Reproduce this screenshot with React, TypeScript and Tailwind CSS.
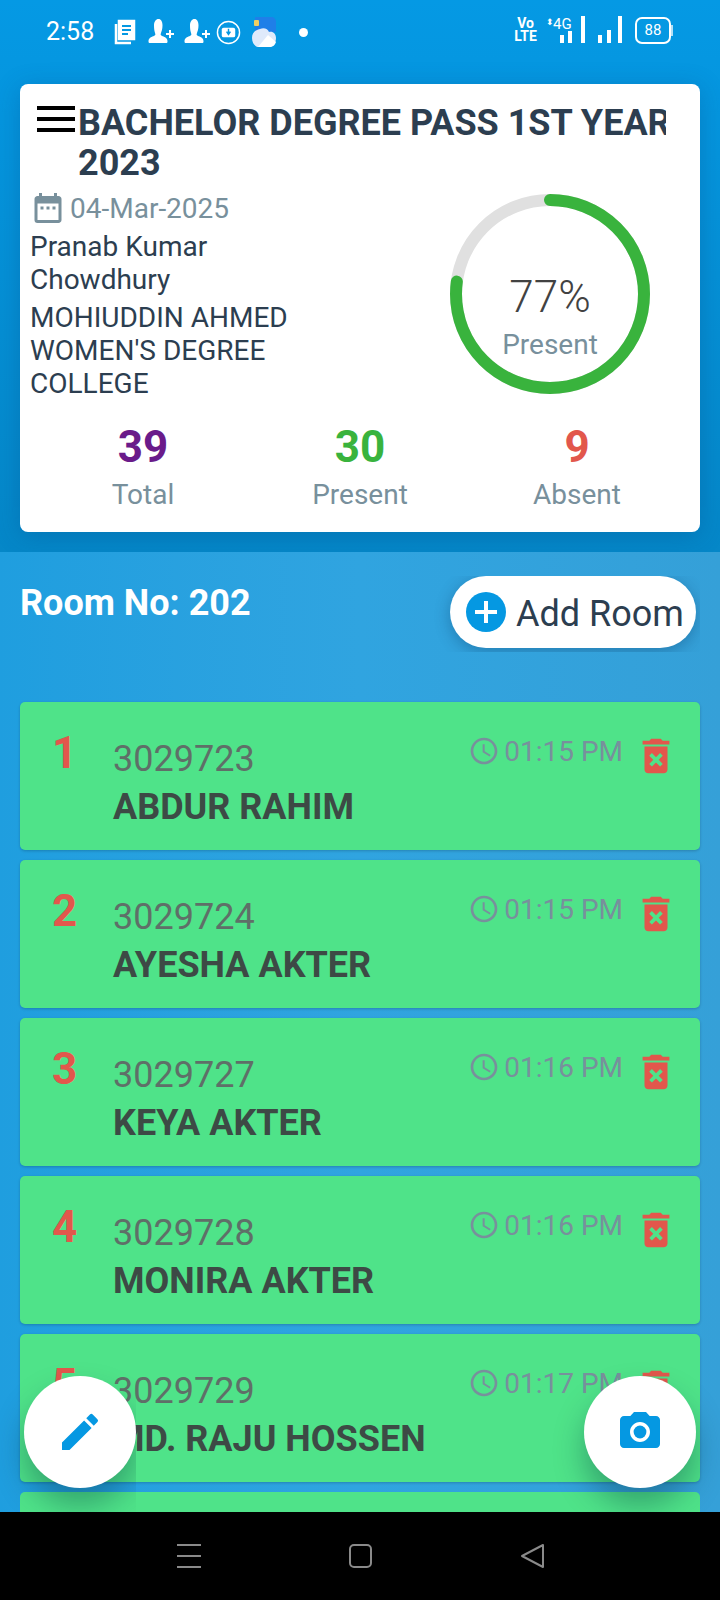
import { MdAccessTime, MdDateRange, MdDeleteForever, MdEdit, MdPhotoCamera } from 'react-icons/md';

const students = [
  { no: 1, roll: '3029723', name: 'ABDUR RAHIM', time: '01:15 PM' },
  { no: 2, roll: '3029724', name: 'AYESHA AKTER', time: '01:15 PM' },
  { no: 3, roll: '3029727', name: 'KEYA AKTER', time: '01:16 PM' },
  { no: 4, roll: '3029728', name: 'MONIRA AKTER', time: '01:16 PM' },
  { no: 5, roll: '3029729', name: 'MD. RAJU HOSSEN', time: '01:17 PM' },
];

function PersonAdd() {
  return (
    <svg width="26" height="28" viewBox="0 0 26 28" fill="white">
      <path d="M10.500 1c2.500 0 4 2.500 4 6.500 0 3.500-1 6-1.800 8.500-.3 1 .5 1.700 2 2.300 2.300.9 4.800 1.700 4.800 5.200 0 1-.5 1.500-1.500 1.500H2c-1 0-1.500-.5-1.500-1.500 0-3.500 2.500-4.300 4.800-5.200 1.500-.6 2.300-1.300 2-2.300C6.500 13.500 6 11 6 7.500 6 3.500 8 1 10.500 1z" />
      <path d="M21 12h2v3h3v2h-3v3h-2v-3h-3v-2h3z" />
    </svg>
  );
}

function StatusBar() {
  return (
    <div className="flex h-[84px] items-start justify-between pl-[46px] pr-[47px] pt-[16px] text-white">
      <div className="flex items-center">
        <span className="w-[68px] text-[25px] leading-[32px] font-normal">2:58</span>
        <div className="flex items-center">
          <svg width="22" height="28" viewBox="0 0 22 28" fill="none" stroke="white" strokeWidth="2.500">
            <path d="M5 3h15v18H5z" fill="white" />
            <path d="M2 6v19h15" />
            <path d="M8 8h9M8 12h9M8 16h6" stroke="#0598e2" strokeWidth="2" />
          </svg>
          <div className="ml-[12px]"><PersonAdd /></div>
          <div className="ml-[10px]"><PersonAdd /></div>
          <svg width="25" height="25" viewBox="0 0 26 26" fill="none" className="ml-[6px]">
            <circle cx="13" cy="13" r="11.500" stroke="white" strokeWidth="1.500" />
            <rect x="6" y="8" width="14" height="10" rx="2" fill="white" />
            <path d="M13 9v5M11 12l2 3 2-3" stroke="#0598e2" strokeWidth="1.500" />
          </svg>
          <svg width="24" height="30" viewBox="0 0 24 30" className="ml-[11px]">
            <path d="M3 0h16c3 0 5 2 5 5v10H3z" fill="#1f7fe8" />
            <rect x="2" y="3" width="5" height="6" rx="1" fill="#f0cf62" />
            <path d="M8 12c4-2 8 0 9 3 4-1 7 2 7 6 0 5-3 9-7 9H7c-4 0-7-4-7-9s3-8 8-9z" fill="#dfeafb" />
            <path d="M6 30l10-12 8 7c-1 3-3 5-7 5z" fill="white" />
          </svg>
          <span className="ml-[23px] h-[9px] w-[9px] rounded-full bg-white" />
        </div>
      </div>
      <div className="flex items-center">
        <div className="mr-[8px] flex w-[25px] flex-col text-center text-[14px] leading-[13px] font-bold">
          <span>Vo</span>
          <span>LTE</span>
        </div>
        <div className="relative h-[28px] w-[46px]">
          <span className="absolute top-[2px] left-0 text-[9px] leading-none">⬍</span>
          <span className="absolute top-[1px] left-[7px] text-[15px] leading-none">4G</span>
          <svg width="46" height="28" viewBox="0 0 46 28" fill="white">
            <rect x="14" y="19" width="4" height="8" />
            <rect x="22" y="15" width="4" height="12" />
            <rect x="35" y="0" width="4" height="27" />
          </svg>
        </div>
        <svg width="34" height="28" viewBox="0 0 34 28" fill="white" className="ml-[1px] mr-[8px]">
          <rect x="5" y="19" width="4" height="8" />
          <rect x="14" y="14" width="4" height="13" />
          <rect x="25" y="0" width="4" height="27" />
        </svg>
        <div className="flex items-center">
          <div className="flex h-[27px] w-[36px] items-center justify-center rounded-[7px] border-2 border-white text-[15px] leading-none">88</div>
          <div className="h-[11px] w-[2px] bg-white/70" />
        </div>
      </div>
    </div>
  );
}

function ProgressRing() {
  const r = 94;
  const circ = 2 * Math.PI * r;
  return (
    <div className="relative mt-[5px] mr-[50px] h-[200px] w-[200px]">
      <svg width="200" height="200" viewBox="0 0 200 200" className="-rotate-90">
        <circle cx="100" cy="100" r={r} fill="none" stroke="#e0e0e0" strokeWidth="12" />
        <circle
          cx="100"
          cy="100"
          r={r}
          fill="none"
          stroke="#39b33d"
          strokeWidth="12"
          strokeLinecap="round"
          strokeDasharray={`${circ * 0.77} ${circ}`}
        />
      </svg>
      <div className="absolute inset-0 flex flex-col items-center pt-[76px]">
        <span className="text-[44px] leading-[54px] font-light text-[#424242]">77%</span>
        <span className="mt-[3px] text-[28px] leading-[36px] text-[#78909c]">Present</span>
      </div>
    </div>
  );
}

function Stat({ value, label, color }: { value: string; label: string; color: string }) {
  return (
    <div className="flex flex-col items-center">
      <span className={`text-[44px] leading-[50px] font-bold ${color}`}>{value}</span>
      <span className="mt-[3px] text-[28px] leading-[40px] text-[#78909c]">{label}</span>
    </div>
  );
}

function Summary() {
  return (
    <div className="mx-5 h-[448px] rounded-[8px] bg-white shadow-[0_4px_24px_rgba(0,60,120,0.25)]">
      <div className="flex pt-[19px] pl-[17px]">
        <div className="mt-[3px] mr-[3px] flex w-[38px] flex-col gap-[7px]">
          <div className="h-[4px] bg-black" />
          <div className="h-[4px] bg-black" />
          <div className="h-[4px] bg-black" />
        </div>
        <div className="h-[86px] w-[588px] overflow-hidden text-[36px] leading-[40px] font-bold whitespace-nowrap text-[#2c3e50]">
          BACHELOR DEGREE PASS 1ST YEAR
          <br />
          2023
        </div>
      </div>
      <div className="flex justify-between">
        <div className="w-[290px] pl-[10px] text-[28px] leading-[33px] text-[#2c3e50]">
          <div className="flex h-[38px] items-center">
            <MdDateRange className="h-[36px] w-[36px] text-[#78909c]" />
            <span className="ml-[4px] text-[#78909c]">04-Mar-2025</span>
          </div>
          <div className="mt-[3px] w-[220px]">Pranab Kumar Chowdhury</div>
          <div className="mt-[5px]">MOHIUDDIN AHMED WOMEN'S DEGREE COLLEGE</div>
        </div>
        <ProgressRing />
      </div>
      <div className="mt-[22px] grid grid-cols-[217px_217px_217px] justify-center">
        <Stat value="39" label="Total" color="text-[#6a1b8a]" />
        <Stat value="30" label="Present" color="text-[#39b33d]" />
        <Stat value="9" label="Absent" color="text-[#e2574c]" />
      </div>
    </div>
  );
}

function StudentRow({ no, roll, name, time }: { no: number; roll: string; name: string; time: string }) {
  return (
    <div className="flex h-[148px] shrink-0 rounded-[5px] bg-[#4fe389] shadow-[0_1px_3px_rgba(0,0,0,0.2)]">
      <span className="ml-[32px] w-[61px] pt-[26px] text-[44px] leading-[50px] font-bold text-[#e2574c]">{no}</span>
      <div className="pt-[35px]">
        <div className="text-[36px] leading-[44px] text-[#5f6f68]">{roll}</div>
        <div className="text-[36px] leading-[52px] font-bold text-[#3d4a45]">{name}</div>
      </div>
      <div className="ml-auto flex items-start pt-[33px] pr-[21px]">
        <div className="flex items-center text-[#78909c]">
          <MdAccessTime className="-mt-[1px] h-[32px] w-[32px]" />
          <span className="mt-[1px] ml-[4px] text-[28px] leading-[32px]">{time}</span>
        </div>
        <MdDeleteForever className="-mt-[2px] ml-[10px] h-[46px] w-[46px] text-[#e2574c]" />
      </div>
    </div>
  );
}

export default function App() {
  return (
    <div className="relative flex h-[1600px] w-[720px] flex-col overflow-hidden bg-black font-['Roboto',sans-serif]">
      <div className="h-[552px] shrink-0 bg-gradient-to-b from-[#0599e4] to-[#0587c8]">
        <StatusBar />
        <Summary />
      </div>
      <div className="flex-1 overflow-hidden bg-gradient-to-r from-[#1f9edf] via-[#30a4e0] to-[#35a0d8]">
        <div className="flex h-[150px] items-start justify-between pt-[24px] pl-5">
          <span className="mt-[7px] text-[36px] leading-[40px] font-bold text-white">Room No: 202</span>
          <div className="mr-[20px] overflow-hidden pr-[4px] pb-[4px] pl-[30px]">
            <div className="flex h-[72px] w-[246px] items-center rounded-[36px] bg-white pl-[16px] shadow-[0_4px_16px_rgba(0,40,80,0.3)]">
              <span className="flex h-[40px] w-[40px] items-center justify-center rounded-full bg-[#0598e2]">
                <svg width="22" height="22" viewBox="0 0 22 22" fill="white">
                  <path d="M9 0h4v9h9v4h-9v9H9v-9H0V9h9z" />
                </svg>
              </span>
              <span className="mt-[3px] ml-[10px] text-[36px] leading-[44px] text-[#2c3e50]">Add Room</span>
            </div>
          </div>
        </div>
        <div className="flex flex-col gap-[10px] px-5">
          {students.map((s) => (
            <StudentRow key={s.no} {...s} />
          ))}
          <div className="h-[148px] shrink-0 rounded-[5px] bg-[#4fe389]" />
        </div>
      </div>
      <div className="flex h-[88px] shrink-0 items-center justify-center bg-black pb-[1px]">
        <div className="flex w-[367px] items-center justify-between">
          <div className="flex h-[24px] w-[24px] flex-col justify-between">
            <div className="h-[2px] bg-[#8a8a8a]" />
            <div className="h-[2px] bg-[#8a8a8a]" />
            <div className="h-[2px] bg-[#8a8a8a]" />
          </div>
          <div className="h-[24px] w-[23px] rounded-[5px] border-2 border-[#8a8a8a]" />
          <svg width="24" height="26" viewBox="0 0 24 26" fill="none" stroke="#8a8a8a" strokeWidth="2" strokeLinejoin="round">
            <path d="M23 2v22L2 13z" />
          </svg>
        </div>
      </div>
      <div className="absolute top-[1340px] left-0 h-[172px] w-[136px] overflow-hidden">
        <button className="mt-[36px] ml-[24px] flex h-[112px] w-[112px] items-center justify-center rounded-full bg-white shadow-[0_18px_30px_rgba(0,50,60,0.35)]">
          <MdEdit className="h-[48px] w-[48px] text-[#0598e2]" />
        </button>
      </div>
      <div className="absolute top-[1340px] left-[540px] h-[172px] w-[180px] overflow-hidden">
        <button className="mt-[36px] ml-[44px] flex h-[112px] w-[112px] items-center justify-center rounded-full bg-white shadow-[0_18px_30px_rgba(0,50,60,0.35)]">
          <MdPhotoCamera className="h-[48px] w-[48px] text-[#0598e2]" />
        </button>
      </div>
    </div>
  );
}
